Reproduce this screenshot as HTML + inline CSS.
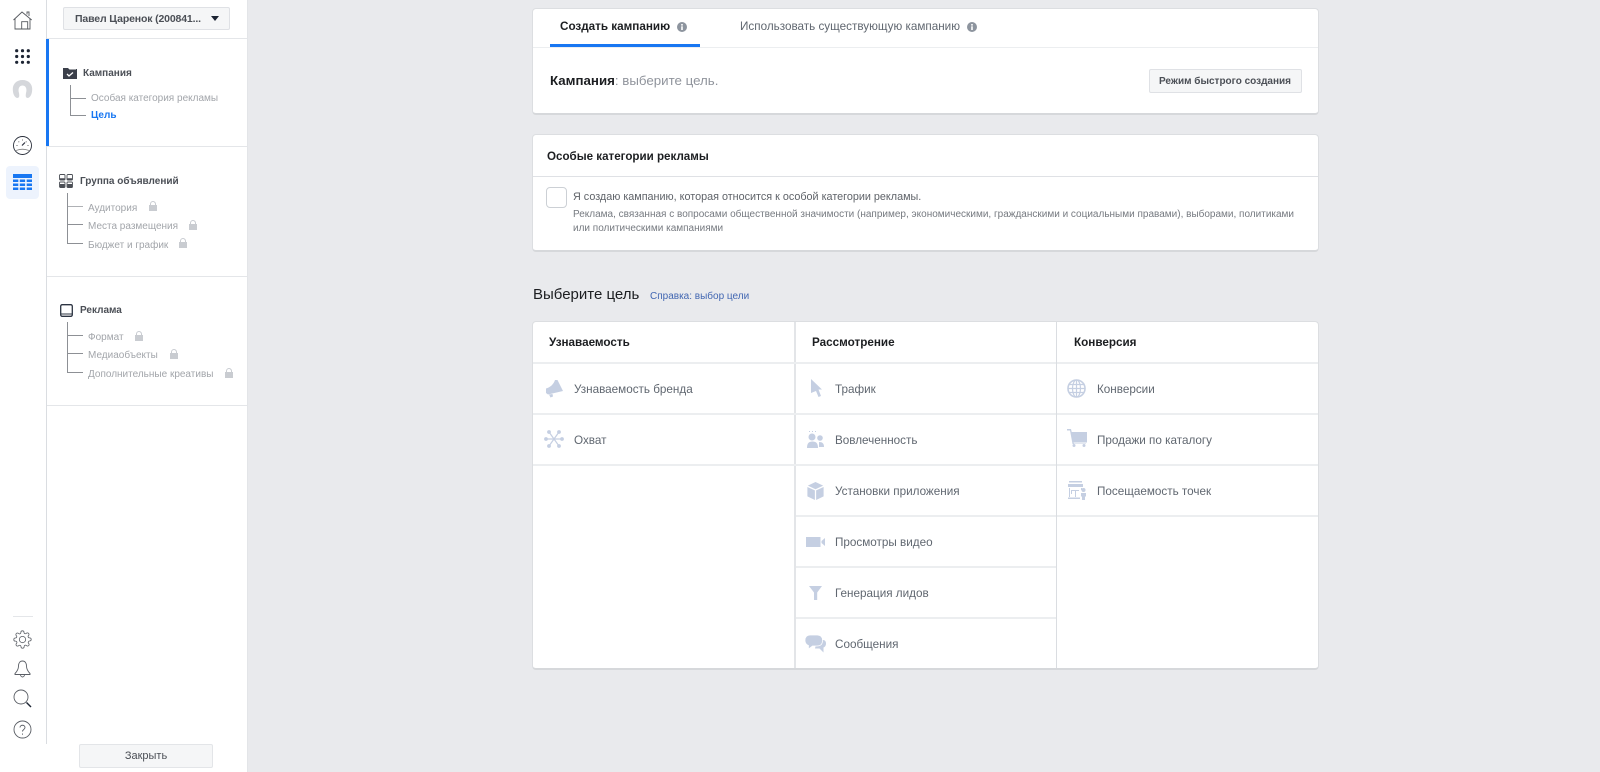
<!DOCTYPE html>
<html lang="ru"><head><meta charset="utf-8"><title>Ads Manager</title>
<style>
html,body{margin:0;padding:0;width:1600px;height:772px;overflow:hidden;background:#e9eaed;font-family:"Liberation Sans",sans-serif}
div,span,svg{position:absolute;box-sizing:border-box}
#w{left:0;top:0;width:1600px;height:772px;filter:blur(.35px)}
.t{white-space:nowrap;line-height:16px;height:16px}
.b{font-weight:700}
.g{font-size:10px;color:#a2a5aa}
.h{font-size:10px;color:#4b4f56;font-weight:700}
.o{font-size:11.7px;color:#606770}
.c{font-size:11.7px;color:#1c1e21;font-weight:700}
.l{background:#8d9095}
.hr{background:#e4e6e9;height:1px}
.rw{background:#eceef0;height:2px}
.p{background:#fff;border:1px solid #dcdee1;border-bottom:2px solid #d6d8db;border-radius:4px}
.btn{background:#f5f6f7;border:1px solid #dfe1e5;border-radius:2px}
</style></head><body><div id="w">
<div style="left:0;top:0;width:248px;height:772px;background:#fff"></div>
<div style="left:46px;top:0;width:1px;height:744px;background:#dadde1"></div>
<div style="left:247px;top:0;width:1px;height:772px;background:#e3e5e8"></div>

<!-- rail icons -->
<svg style="left:12px;top:9px" width="22" height="22" viewBox="0 0 22 22" fill="none" stroke="#55585e" stroke-width=".9"><path d="M1.500 11 10 3 19.700 11M3 9.500V20H18V9.500M9.700 20V12.700H15.700V20M15 5.500V3H17V7"/></svg>
<svg style="left:14px;top:48px" width="17" height="17" fill="#1c2433"><circle cx="2.700" cy="2.700" r="1.600"/><circle cx="8.500" cy="2.700" r="1.600"/><circle cx="14.300" cy="2.700" r="1.600"/><circle cx="2.700" cy="8.500" r="1.600"/><circle cx="8.500" cy="8.500" r="1.600"/><circle cx="14.300" cy="8.500" r="1.600"/><circle cx="2.700" cy="14.300" r="1.600"/><circle cx="8.500" cy="14.300" r="1.600"/><circle cx="14.300" cy="14.300" r="1.600"/></svg>
<svg style="left:12px;top:79px" width="21" height="20" viewBox="0 0 21 20"><path d="M10.500 1C4.500 1 .8 5 .8 10 .8 14 2 18 5 19 7.500 19 7.500 17 7 14 6 11 6.500 6.500 10.500 6.500 14.500 6.500 15 11 14 14 13.500 17 13.500 19 16 19 19 18 20.200 14 20.200 10 20.200 5 16.500 1 10.500 1z" fill="#d5d7db"/></svg>
<svg style="left:12px;top:135px" width="21" height="21" viewBox="0 0 21 21" fill="none" stroke="#2a303c" stroke-width=".9"><circle cx="10.500" cy="10.500" r="9"/><path d="M4 15.500Q10.500 13 17 15.500" stroke="#888"/><path d="M10 10.500 13 7.500" stroke-width="1.200"/><path d="M4.500 10.500h1M6.500 6.500l.7.7M10.500 4.500v1M14.500 6.500l-.7.7M15.500 10.500h1" stroke="#666"/></svg>
<div style="left:6px;top:166px;width:33px;height:33px;background:#edf3fd;border-radius:4px"></div>
<svg style="left:13px;top:174px" width="19" height="17" fill="#1877f2"><rect width="19" height="4"/><rect y="5.500" width="5.300" height="2.500"/><rect x="6.800" y="5.500" width="5.300" height="2.500"/><rect x="13.700" y="5.500" width="5.300" height="2.500"/><rect y="9.500" width="5.300" height="2.500"/><rect x="6.800" y="9.500" width="5.300" height="2.500"/><rect x="13.700" y="9.500" width="5.300" height="2.500"/><rect y="13.500" width="5.300" height="2.500"/><rect x="6.800" y="13.500" width="5.300" height="2.500"/><rect x="13.700" y="13.500" width="5.300" height="2.500"/></svg>
<div style="left:13px;top:616px;width:20px;height:1px;background:#e4e6e9"></div>
<svg style="left:13px;top:630px" width="19" height="19" viewBox="0 0 24 24" fill="none" stroke="#5a5e65" stroke-width="1"><circle cx="12" cy="12" r="4"/><path d="M19.400 15a1.650 1.650 0 0 0 .33 1.820l.06.06a2 2 0 1 1-2.830 2.830l-.06-.06a1.650 1.650 0 0 0-2.820 1.170V21a2 2 0 1 1-4 0v-.09a1.650 1.650 0 0 0-2.820-1.170l-.06.06a2 2 0 1 1-2.830-2.830l.06-.06a1.650 1.650 0 0 0-1.170-2.820H3a2 2 0 1 1 0-4h.09a1.650 1.650 0 0 0 1.170-2.820l-.06-.06a2 2 0 1 1 2.830-2.830l.06.06a1.650 1.650 0 0 0 2.820-1.170V3a2 2 0 1 1 4 0v.09a1.650 1.650 0 0 0 2.820 1.170l.06-.06a2 2 0 1 1 2.830 2.830l-.06.06a1.650 1.650 0 0 0 1.170 2.820H21a2 2 0 1 1 0 4h-.09a1.650 1.650 0 0 0-1.510 1.090z"/></svg>
<svg style="left:14px;top:660px" width="17" height="19" viewBox="0 0 17 19" fill="none" stroke="#5a5e65" stroke-width=".9"><path d="M8.500 1C6 1 4.500 3 4.500 6c0 3-1 5-3.500 7.500V14.500H16V13.500C13.500 11 12.500 9 12.500 6 12.500 3 11 1 8.500 1zM6.500 14.500a2 2.500 0 0 0 4 0"/></svg>
<svg style="left:13px;top:689px" width="20" height="20" viewBox="0 0 20 20" fill="none" stroke="#5a5e65" stroke-width=".9"><circle cx="8" cy="8" r="7"/><path d="M13.500 13.500 18 18" stroke="#1c2433" stroke-width="1.400"/></svg>
<svg style="left:13px;top:720px" width="19" height="19" viewBox="0 0 19 19" fill="none" stroke="#5a5e65" stroke-width=".9"><circle cx="9.500" cy="9.500" r="8.500"/><path d="M7 7.500C7 4.500 12 4.500 12 7.500 12 9.500 9.500 9.500 9.500 11.500M9.500 13.500v1.200"/></svg>

<!-- sidebar -->
<div class="btn" style="left:63px;top:7px;width:167px;height:23px"></div>
<div class="t" style="left:75px;top:11px;font-size:10.5px;letter-spacing:-.15px;font-weight:700;color:#4b4f56">Павел Царенок (200841...</div>
<div style="left:211px;top:16px;width:0;height:0;border-left:4.500px solid transparent;border-right:4.500px solid transparent;border-top:5px solid #1c2433"></div>
<div class="hr" style="left:47px;top:38px;width:200px"></div>
<div style="left:46px;top:39px;width:3px;height:107px;background:#1877f2"></div>
<div class="hr" style="left:47px;top:146px;width:200px"></div>
<div class="hr" style="left:47px;top:276px;width:200px"></div>
<div class="hr" style="left:47px;top:405px;width:200px"></div>

<svg style="left:63px;top:67px" width="14" height="12" viewBox="0 0 14 12"><path d="M0 1h5l1.500 1.500H13v-.5H14V12H0z" fill="#3b3f4a"/><path d="M4 7l2 2 4-3.500" stroke="#fff" stroke-width="1.300" fill="none"/></svg>
<div class="t h" style="left:83px;top:66px">Кампания</div>
<div class="l" style="left:70px;top:85px;width:1px;height:30px"></div>
<div class="l" style="left:70px;top:98px;width:16px;height:1px"></div>
<div class="l" style="left:70px;top:115px;width:16px;height:1px"></div>
<div class="t g" style="left:91px;top:91px">Особая категория рекламы</div>
<div class="t b" style="left:91px;top:108px;font-size:10px;color:#1877f2">Цель</div>

<svg style="left:59px;top:174px" width="14" height="14" fill="none" stroke="#4b4f56" stroke-width=".9"><rect x=".5" y=".5" width="5.500" height="5.500" rx="1"/><rect x="8" y=".5" width="5.500" height="5.500" rx="1"/><rect x=".5" y="8" width="5.500" height="5.500" rx="1"/><rect x="8" y="8" width="5.500" height="5.500" rx="1"/><path d="M1 5h4.500M8.500 5H13" stroke-width="1.500"/><path d="M1 11.500h4.500M8.500 11.500H13" stroke-width="3"/></svg>
<div class="t h" style="left:80px;top:174px">Группа объявлений</div>
<div class="l" style="left:67px;top:193px;width:1px;height:51px"></div>
<div class="l" style="left:67px;top:206px;width:16px;height:1px;opacity:.7"></div>
<div class="l" style="left:67px;top:224px;width:16px;height:1px"></div>
<div class="l" style="left:67px;top:243px;width:16px;height:1px"></div>
<div class="t g" style="left:88px;top:201px">Аудитория</div>
<div class="t g" style="left:88px;top:219px">Места размещения</div>
<div class="t g" style="left:88px;top:238px">Бюджет и график</div>

<svg style="left:60px;top:304px" width="13" height="13" fill="none" stroke="#2c3442" stroke-width="1.300"><rect x=".7" y=".7" width="11.600" height="11.600" rx="1.500"/><path d="M1 10h11" stroke-width="1"/></svg>
<div class="t h" style="left:80px;top:303px">Реклама</div>
<div class="l" style="left:67px;top:322px;width:1px;height:50px"></div>
<div class="l" style="left:67px;top:335px;width:16px;height:1px"></div>
<div class="l" style="left:67px;top:353px;width:16px;height:1px"></div>
<div class="l" style="left:67px;top:372px;width:16px;height:1px"></div>
<div class="t g" style="left:88px;top:330px">Формат</div>
<div class="t g" style="left:88px;top:348px">Медиаобъекты</div>
<div class="t g" style="left:88px;top:367px">Дополнительные креативы</div>

<!-- locks -->
<svg style="left:149px;top:201px" width="8" height="10"><path d="M1.500 4V3a2.500 2.500 0 0 1 5 0V4" fill="none" stroke="#c9ccd1"/><rect y="4" width="8" height="6" fill="#c9ccd1"/></svg>
<svg style="left:189px;top:220px" width="8" height="10"><path d="M1.500 4V3a2.500 2.500 0 0 1 5 0V4" fill="none" stroke="#c9ccd1"/><rect y="4" width="8" height="6" fill="#c9ccd1"/></svg>
<svg style="left:179px;top:238px" width="8" height="10"><path d="M1.500 4V3a2.500 2.500 0 0 1 5 0V4" fill="none" stroke="#c9ccd1"/><rect y="4" width="8" height="6" fill="#c9ccd1"/></svg>
<svg style="left:135px;top:331px" width="8" height="10"><path d="M1.500 4V3a2.500 2.500 0 0 1 5 0V4" fill="none" stroke="#c9ccd1"/><rect y="4" width="8" height="6" fill="#c9ccd1"/></svg>
<svg style="left:170px;top:349px" width="8" height="10"><path d="M1.500 4V3a2.500 2.500 0 0 1 5 0V4" fill="none" stroke="#c9ccd1"/><rect y="4" width="8" height="6" fill="#c9ccd1"/></svg>
<svg style="left:225px;top:368px" width="8" height="10"><path d="M1.500 4V3a2.500 2.500 0 0 1 5 0V4" fill="none" stroke="#c9ccd1"/><rect y="4" width="8" height="6" fill="#c9ccd1"/></svg>

<div style="left:79px;top:744px;width:134px;height:24px;background:#f5f6f7;border:1px solid #e3e5e8;border-radius:2px"></div>
<div class="t" style="left:79px;top:748px;width:134px;text-align:center;font-size:11px;color:#4b4f56">Закрыть</div>

<!-- panel 1 -->
<div class="p" style="left:532px;top:8px;width:787px;height:107px"></div>
<div class="hr" style="left:533px;top:47px;width:785px;background:#eceef0"></div>
<div style="left:550px;top:44px;width:150px;height:3px;background:#1877f2"></div>
<div class="t c" style="left:560px;top:19px">Создать кампанию</div>
<svg style="left:677px;top:22px" width="10" height="10"><circle cx="5" cy="5" r="5" fill="#8d949e"/><rect x="4.200" y="4.300" width="1.600" height="3.700" fill="#fff"/><rect x="4.200" y="2" width="1.600" height="1.600" fill="#fff"/></svg>
<div class="t o" style="left:740px;top:19px">Использовать существующую кампанию</div>
<svg style="left:967px;top:22px" width="10" height="10"><circle cx="5" cy="5" r="5" fill="#8d949e"/><rect x="4.200" y="4.300" width="1.600" height="3.700" fill="#fff"/><rect x="4.200" y="2" width="1.600" height="1.600" fill="#fff"/></svg>
<div class="t" style="left:550px;top:73px;font-size:13.3px;color:#90949c"><b style="color:#1c1e21">Кампания</b>: выберите цель.</div>
<div class="btn" style="left:1149px;top:69px;width:153px;height:24px"></div>
<div class="t b" style="left:1159px;top:74px;font-size:10px;color:#4b4f56">Режим быстрого создания</div>

<!-- panel 2 -->
<div class="p" style="left:532px;top:134px;width:787px;height:118px"></div>
<div class="hr" style="left:533px;top:176px;width:785px;background:#dfe1e5"></div>
<div class="t c" style="left:547px;top:149px;font-size:11.6px">Особые категории рекламы</div>
<div style="left:546px;top:187px;width:21px;height:21px;background:#fff;border:1px solid #ccd0d5;border-radius:4px"></div>
<div class="t" style="left:573px;top:189px;font-size:10.8px;color:#5f6369">Я создаю кампанию, которая относится к особой категории рекламы.</div>
<div class="t" style="left:573px;top:207px;font-size:10px;color:#767a80">Реклама, связанная с вопросами общественной значимости (например, экономическими, гражданскими и социальными правами), выборами, политиками</div>
<div class="t" style="left:573px;top:221px;font-size:10px;color:#767a80">или политическими кампаниями</div>

<div class="t" style="left:533px;top:287px;font-size:15px;color:#1c1e21">Выберите цель</div>
<div class="t" style="left:650px;top:289px;font-size:10px;color:#4267b2">Справка: выбор цели</div>

<!-- table -->
<div class="p" style="left:532px;top:321px;width:787px;height:349px"></div>
<div style="left:794px;top:322px;width:2px;height:346px;background:#e3e5e8"></div>
<div style="left:1056px;top:322px;width:1px;height:346px;background:#dadde1"></div>
<div class="rw" style="left:533px;top:362px;width:785px"></div>
<div class="rw" style="left:533px;top:413px;width:785px"></div>
<div class="rw" style="left:533px;top:464px;width:785px"></div>
<div class="rw" style="left:796px;top:515px;width:522px"></div>
<div class="rw" style="left:796px;top:566px;width:260px"></div>
<div class="rw" style="left:796px;top:617px;width:260px"></div>
<div style="left:1056px;top:322px;width:1px;height:346px;background:#dadde1"></div>

<div class="t c" style="left:549px;top:335px">Узнаваемость</div>
<div class="t c" style="left:812px;top:335px">Рассмотрение</div>
<div class="t c" style="left:1074px;top:335px">Конверсия</div>

<div class="t o" style="left:574px;top:382px">Узнаваемость бренда</div>
<div class="t o" style="left:574px;top:433px">Охват</div>
<div class="t o" style="left:835px;top:382px">Трафик</div>
<div class="t o" style="left:835px;top:433px">Вовлеченность</div>
<div class="t o" style="left:835px;top:484px">Установки приложения</div>
<div class="t o" style="left:835px;top:535px">Просмотры видео</div>
<div class="t o" style="left:835px;top:586px">Генерация лидов</div>
<div class="t o" style="left:835px;top:637px">Сообщения</div>
<div class="t o" style="left:1097px;top:382px">Конверсии</div>
<div class="t o" style="left:1097px;top:433px">Продажи по каталогу</div>
<div class="t o" style="left:1097px;top:484px">Посещаемость точек</div>

<!-- objective icons -->
<svg style="left:545px;top:379px" width="19" height="19" viewBox="0 0 19 19" fill="#c5cfe2"><path d="M10 1H12.500L18 12 3 15.500 1 14V9.500C5 8.500 8.500 5.500 10 1z"/><path d="M4 15.500 7.500 15 8 17.500 5.500 18.500z"/></svg>
<svg style="left:544px;top:429px" width="20" height="20" viewBox="0 0 20 20" fill="#c5cfe2" stroke="#c5cfe2" stroke-width="1.200"><path d="M10 10 5 3M10 10 15 3M10 10H2M10 10H18M10 10 5 17M10 10 15 17"/><circle cx="5" cy="3" r="1.300"/><circle cx="15" cy="3" r="1.300"/><circle cx="2" cy="10" r="1.300"/><circle cx="18" cy="10" r="1.300"/><circle cx="5" cy="17" r="1.300"/><circle cx="15" cy="17" r="1.300"/></svg>
<svg style="left:810px;top:379px" width="13" height="18" viewBox="0 0 13 18" fill="#c5cfe2"><path d="M1 0 12 10.500H8.500L11 17 8.500 18 6 12 1 14z"/></svg>
<svg style="left:806px;top:430px" width="19" height="20" viewBox="0 0 19 20" fill="#c5cfe2"><circle cx="6" cy="7" r="3.500"/><circle cx="14" cy="8" r="2.800"/><path d="M1 18c0-5 2-6.500 5.500-6.500S12 13 12 18z"/><path d="M13 12c3.500 0 5 1.500 5 5h-5z"/><path d="M3 1h1v1H3zM6 1h1v1H6zM9 1h1v1H9z"/></svg>
<svg style="left:807px;top:482px" width="17" height="18" viewBox="0 0 18 20" fill="#c5cfe2"><path d="M9 0 17.500 4 9 8 .5 4z"/><path d="M0 5.500 8.300 9.300V20L0 16zM18 5.500 9.700 9.300V20L18 16z"/></svg>
<svg style="left:806px;top:537px" width="19" height="10" viewBox="0 0 19 10" fill="#c5cfe2"><rect width="14.500" height="10"/><path d="M15.500 4 19 1V9L15.500 6z"/></svg>
<svg style="left:809px;top:586px" width="13" height="14" viewBox="0 0 13 14" fill="#c5cfe2"><path d="M0 0H13L8.200 6.500V14H5V6.500z"/></svg>
<svg style="left:805px;top:635px" width="21" height="18" viewBox="0 0 21 18" fill="#c5cfe2"><path d="M12 5H18C20 5 21 6.500 21 8.500S20 12 18.500 12.500V17.500L14.500 13.500H10z"/><path d="M5 0H12C15.500 0 17.500 2 17.500 5.500S15.500 11 12 11H7.500L3.500 14V10.500C1.500 10 0 8 0 5.500 0 2 2 0 5 0z" stroke="#fff" stroke-width=".7"/></svg>
<svg style="left:1067px;top:379px" width="19" height="19" viewBox="0 0 19 19" fill="none" stroke="#c5cfe2" stroke-width="1.200"><circle cx="9.500" cy="9.500" r="8.500" stroke-width="1.600"/><ellipse cx="9.500" cy="9.500" rx="4" ry="8.500"/><path d="M9.500 1v17M1 9.500h17M2 5.500h15M2 13.500h15"/></svg>
<svg style="left:1067px;top:429px" width="20" height="18" viewBox="0 0 20 18" fill="#c5cfe2"><path d="M0 0H4L4.700 3H20V13.500H6.500L7 14.500H19V15H5.500L3 1.500H0z"/><circle cx="7" cy="16.500" r="1.500"/><circle cx="17" cy="16.500" r="1.500"/></svg>
<svg style="left:1068px;top:481px" width="19" height="19" viewBox="0 0 19 19" fill="#c5cfe2"><rect x="1" y="0" width="13" height="1.500"/><rect x="0" y="3" width="15" height="3"/><path d="M1 7H2V16H1zM13 7H14V9H13z"/><path d="M3 9H11V10H8V16H7V10H4V13H3z"/><rect x="0" y="16.500" width="12" height="1.500"/><circle cx="15.500" cy="9" r="2"/><path d="M13 12H18V15.500H17V19H14V15.500H13z"/></svg>
</div></body></html>
